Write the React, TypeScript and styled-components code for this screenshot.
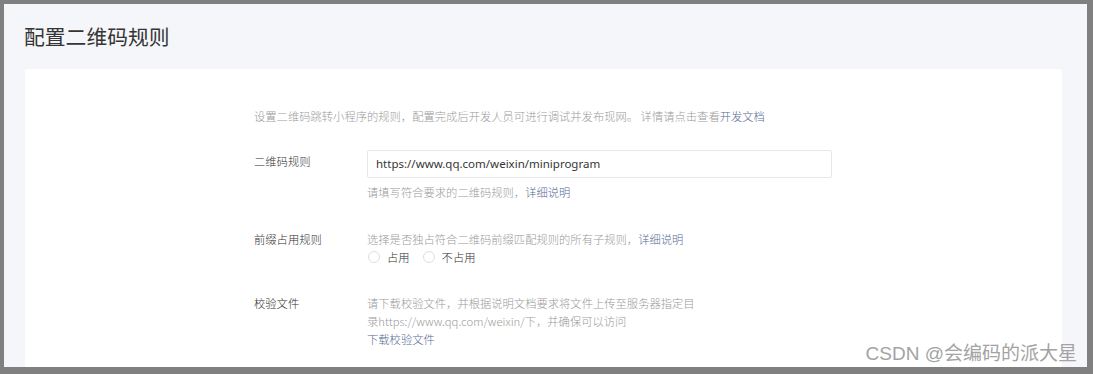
import React from 'react';
import styled, { createGlobalStyle } from 'styled-components';

const GlobalStyle = createGlobalStyle`
  html, body {
    margin: 0;
    padding: 0;
    background: #808080;
  }
  body {
    font-family: "Noto Sans", "Noto Sans CJK SC", sans-serif;
  }
`;

const Frame = styled.div({
  width: '1093px',
  height: '374px',
  boxSizing: 'border-box',
  padding: '4px 6px 7px 4px',
  background: '#808080',
  position: 'relative',
});

const Page = styled.div({
  height: '100%',
  background: '#f5f6fa',
  overflow: 'hidden',
  display: 'flex',
  flexDirection: 'column',
});

const Title = styled.h2({
  margin: 0,
  padding: '18px 0 0 20px',
  height: '47px',
  fontSize: '20.8px',
  fontWeight: 400,
  lineHeight: '29px',
  color: '#353535',
  fontFamily: '"Noto Sans CJK SC", sans-serif',
});

const Card = styled.div({
  flex: 1,
  margin: '0 25px 0 21px',
  background: '#ffffff',
  borderRadius: '3px 3px 0 0',
  padding: '38px 0 0 229px',
  fontFamily: '"Noto Sans CJK SC", sans-serif',
  fontSize: '11.3px',
  fontWeight: 300,
  lineHeight: '18px',
});

const Desc = styled.div({
  color: '#9a9a9a',
  marginBottom: '25px',
});

const Link = styled.a({
  color: '#576b95',
  textDecoration: 'none',
});

const Row = styled.div<{ $gap?: number }>`
  display: flex;
  margin-bottom: ${(p) => p.$gap ?? 0}px;
`;

const Label = styled.div<{ $top?: number }>`
  width: 113px;
  flex-shrink: 0;
  color: #2f2f2f;
  padding-top: ${(p) => p.$top ?? 0}px;
`;

const Field = styled.div({
  display: 'flex',
  flexDirection: 'column',
});

const Input = styled.div({
  width: '465px',
  height: '28px',
  boxSizing: 'border-box',
  border: '1px solid #e4e8eb',
  borderRadius: '2px',
  padding: '0 8px',
  display: 'flex',
  alignItems: 'center',
  fontFamily: '"Noto Sans", sans-serif',
  fontSize: '11.5px',
  fontWeight: 400,
  color: '#353535',
});

const Hint = styled.div({
  color: '#9a9a9a',
  marginTop: '5px',
});

const Tip = styled.div<{ $width?: number }>`
  color: #9a9a9a;
  width: ${(p) => (p.$width ? `${p.$width}px` : 'auto')};
`;

const RadioGroup = styled.div({
  display: 'flex',
  alignItems: 'center',
  color: '#2f2f2f',
});

const RadioItem = styled.label({
  display: 'flex',
  alignItems: 'center',
  marginRight: '12px',
});

const Circle = styled.span({
  width: '12px',
  height: '12px',
  boxSizing: 'border-box',
  border: '1px solid #dcdee2',
  borderRadius: '50%',
  marginRight: '7px',
  marginLeft: '1px',
});

const Watermark = styled.div({
  position: 'absolute',
  right: '16px',
  bottom: '8px',
  fontFamily: '"Liberation Sans", "Noto Sans CJK SC", sans-serif',
  fontSize: '19px',
  color: '#a3a3a3',
  textShadow: '0 0 1px #ffffff',
  lineHeight: '24px',
});

const Radio: React.FC<{ text: string }> = ({ text }) => (
  <RadioItem>
    <Circle />
    {text}
  </RadioItem>
);

export default function App() {
  return (
    <>
      <GlobalStyle />
      <Frame>
        <Page>
          <Title>配置二维码规则</Title>
          <Card>
            <Desc>
              设置二维码跳转小程序的规则，配置完成后开发人员可进行调试并发布现网。 详情请点击查看
              <Link>开发文档</Link>
            </Desc>
            <Row $gap={29}>
              <Label $top={2}>二维码规则</Label>
              <Field>
                <Input>https://www.qq.com/weixin/miniprogram</Input>
                <Hint>
                  请填写符合要求的二维码规则，<Link>详细说明</Link>
                </Hint>
              </Field>
            </Row>
            <Row $gap={28}>
              <Label>前缀占用规则</Label>
              <Field>
                <Tip>
                  选择是否独占符合二维码前缀匹配规则的所有子规则，<Link>详细说明</Link>
                </Tip>
                <RadioGroup>
                  <Radio text="占用" />
                  <Radio text="不占用" />
                </RadioGroup>
              </Field>
            </Row>
            <Row>
              <Label>校验文件</Label>
              <Field>
                <Tip $width={330}>
                  请下载校验文件，并根据说明文档要求将文件上传至服务器指定目录https://www.qq.com/weixin/下，并确保可以访问
                </Tip>
                <Link>下载校验文件</Link>
              </Field>
            </Row>
          </Card>
        </Page>
        <Watermark>CSDN @会编码的派大星</Watermark>
      </Frame>
    </>
  );
}
